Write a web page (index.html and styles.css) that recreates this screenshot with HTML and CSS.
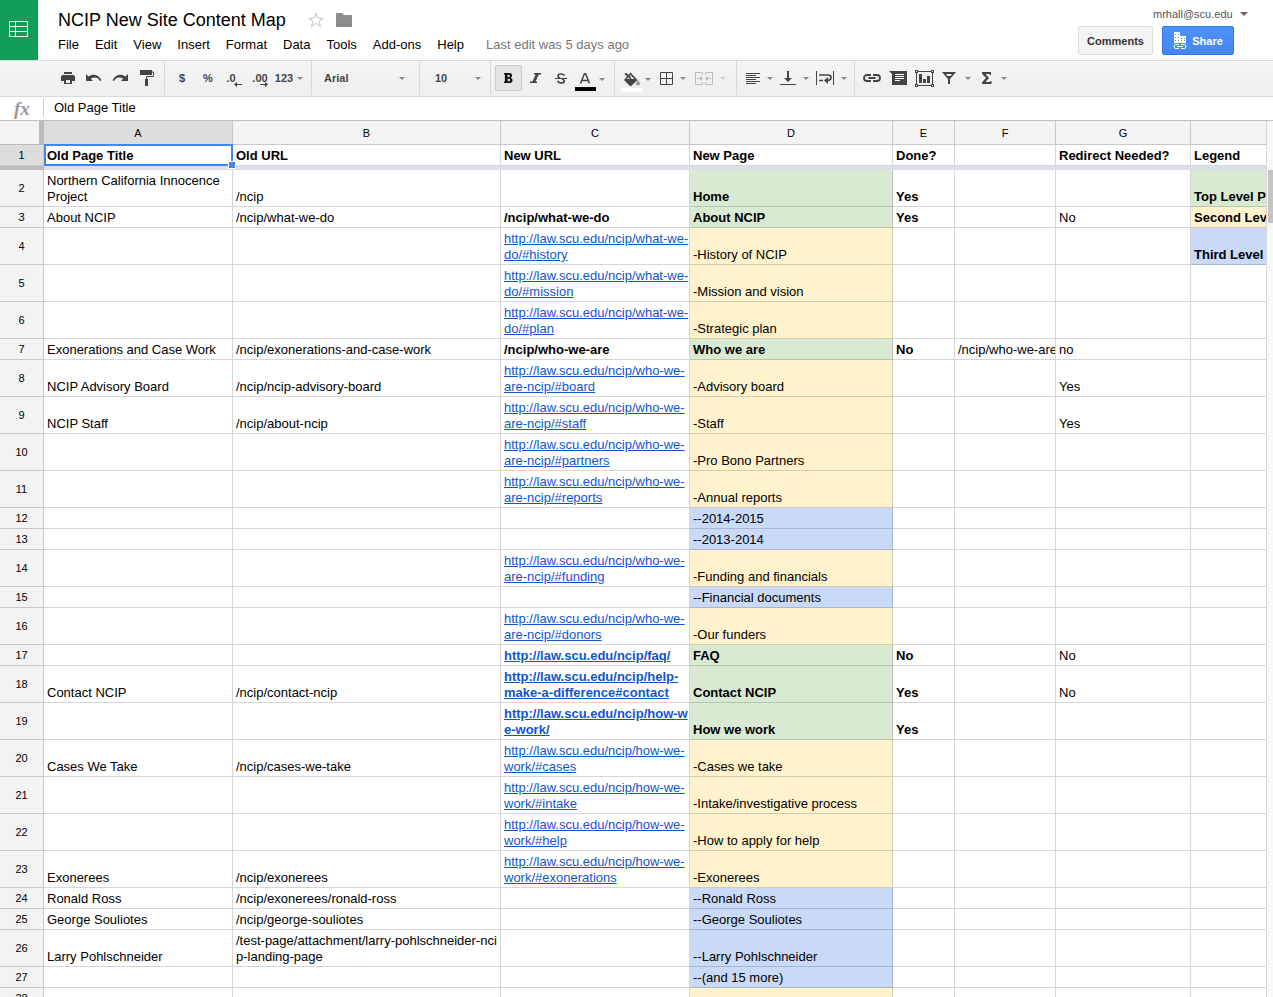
FILE: index.html
```html
<!DOCTYPE html>
<html lang="en">
<head>
<meta charset="utf-8">
<title>NCIP New Site Content Map</title>
<link rel="stylesheet" href="styles.css">
</head>
<body>
<svg class="defs" aria-hidden="true"><symbol id="caret" viewBox="0 0 6 3"><path d="M0 0H6L3 3Z" fill="currentColor"/></symbol></svg>
<header class="top">
  <div class="logo"><svg width="19" height="16" viewBox="0 0 19 16" fill="none" stroke="#fff" stroke-width="1"><path d="M.5.5h18v15H.5zM.5 5.5h18M.5 10.5h18M6.5.5v15"/></svg></div>
  <div class="titles">
    <div class="title-row">
      <h1>NCIP New Site Content Map</h1>
      <button class="plain" aria-label="Star"><svg width="16" height="16" viewBox="0 0 16 16" fill="none" stroke="#c4c4c4"><path d="M8 1 9.800 6.200h5.400L10.900 9.400l1.700 5.200L8 11.400l-4.600 3.200 1.700-5.200L.8 6.200h5.400Z"/></svg></button>
      <button class="plain" aria-label="Move to folder"><svg width="16" height="14" viewBox="0 0 16 14" fill="#8c8c8c"><path d="M0 0h6l2 2h8v12H0z"/></svg></button>
    </div>
    <nav class="menu">
      <button>File</button><button>Edit</button><button>View</button><button>Insert</button><button>Format</button><button>Data</button><button>Tools</button><button>Add-ons</button><button>Help</button>
      <span class="edited">Last edit was 5 days ago</span>
    </nav>
  </div>
  <div class="account">
    <button class="user">mrhall@scu.edu <svg width="8" height="4" viewBox="0 0 8 4"><path d="M0 0h8L4 4z" fill="#666"/></svg></button>
    <div class="actions">
      <button class="btn">Comments</button>
      <button class="btn share"><svg width="14" height="18" viewBox="0 0 14 18"><path d="M1 0h6v4h6v7H1z" fill="#fff"/><path d="M2 2h1v1H2zM5 2h1v1H5zM2 5h1v1H2zM5 5h1v1H5zM2 8h1v1H2zM5 8h1v1H5zM8 6h1v1H8zM11 6h1v1h-1zM8 8h1v1H8zM11 8h1v1h-1z" fill="#4d90fe"/><path d="M6 12.500H3a2 2 0 0 0 0 4h3M8 12.500h3a2 2 0 0 1 0 4H8M4 14.500h6" fill="none" stroke="#fff"/></svg>Share</button>
    </div>
  </div>
</header>
<div class="toolbar">
  <div class="group first">
    <button aria-label="Print"><svg width="14" height="12" viewBox="0 0 14 12"><path d="M3 0h8v2H3zM2 3h10q2 0 2 2v4h-3V7H3v2H0V5q0-2 2-2zM4 8h6v4H4z" fill="#444"/><path d="M3 7h8v5H3z" fill="#444"/><path d="M5 8h4v3H5z" fill="#eee"/></svg></button>
    <button aria-label="Undo"><svg width="16" height="8" viewBox="0 0 16 8"><path d="M0 0v7h7L4.800 4.800C8 2.500 12 3 14 7l1.500-.8C13 .5 7 -1 2.500 2.500Z" fill="#444"/></svg></button>
    <button aria-label="Redo"><svg width="16" height="8" viewBox="0 0 16 8"><path d="M16 0v7H9l2.200-2.200C8 2.500 4 3 2 7L.5 6.200C3 .5 9 -1 13.500 2.500Z" fill="#444"/></svg></button>
    <button class="wide" aria-label="Paint format"><svg width="14" height="16" viewBox="0 0 14 16"><path d="M0 0h12v5H0z" fill="#444"/><path d="M12 2h1.500v4.500h-7V9" fill="none" stroke="#444"/><path d="M5 9h3v7H5z" fill="#444"/></svg></button>
  </div>
  <div class="group numbers">
    <button>$</button>
    <button>%</button>
    <button class="decimal less">.0<svg width="8" height="5" viewBox="0 0 8 5"><path d="M0 2.500 3 0v2h5v1H3v2z" fill="#444"/></svg></button>
    <button class="decimal more">.00<svg width="8" height="5" viewBox="0 0 8 5"><path d="M8 2.500 5 0v2H0v1h5v2z" fill="#444"/></svg></button>
    <button class="format">123<svg class="caret"><use href="#caret"/></svg></button>
  </div>
  <div class="group">
    <label class="pick font"><select aria-label="Font"><option>Arial</option></select><svg class="caret"><use href="#caret"/></svg></label>
  </div>
  <div class="group">
    <label class="pick size"><select aria-label="Font size"><option>10</option></select><svg class="caret"><use href="#caret"/></svg></label>
  </div>
  <div class="group style">
    <button class="pressed" aria-label="Bold"><svg width="9" height="10" viewBox="0 0 10 10" preserveAspectRatio="none"><path fill-rule="evenodd" d="M0 0h6q3 0 3 2.500Q9 4 7.500 4.700 9.500 5.300 9.500 7.200 9.500 10 6 10H0V8.500h1v-7H0zM4 1.800V4h1.500q.9 0 .9-1.100T5.500 1.800zM4 5.800v2.400h1.500q1.100 0 1.100-1.200T5.500 5.800z" fill="#111"/></svg></button>
    <button aria-label="Italic"><svg width="11" height="10" viewBox="0 0 11 10"><path d="M4 0h7v1.500H8.700L5.500 8.500H7V10H0V8.500h2.500l3.200-7H4z" fill="#444"/></svg></button>
    <button aria-label="Strikethrough"><svg width="12" height="11" viewBox="0 0 12 11" fill="none" stroke="#444"><path d="M9.500 2.500Q8.500 1 6 1 3 1 3 3q0 1.300 2 2M7 6q2.200.7 2.200 2 0 2-3.200 2Q3.500 10 2.500 8" stroke-width="1.700"/><path d="M0 5.500h12"/></svg></button>
    <button class="drop color" aria-label="Text color"><svg width="21" height="18" viewBox="0 0 21 18"><path d="m5.500 10.500 4-10h1l4 10M7 7.500h6" fill="none" stroke="#444" stroke-width="1.500"/><path d="M0 14h21v4H0z"/></svg><svg class="caret"><use href="#caret"/></svg></button>
  </div>
  <div class="group paint">
    <button class="drop color" aria-label="Fill color"><svg width="21" height="20" viewBox="0 0 21 20"><path d="M4 1.500 10 7" stroke="#444" stroke-width="1.500"/><path fill-rule="evenodd" d="M9.500.5 16.500 8 9.500 14.500 3 8ZM9.300 2.800 5.800 7h7.400Z" fill="#444"/><path d="M5 1l5 4.500" stroke="#444"/><path d="M17 8q4 5 0 5.500-4-.5 0-5.500" fill="#999"/><path d="M0 16h21v4H0z" fill="#fff"/></svg><svg class="caret"><use href="#caret"/></svg></button>
    <button class="drop roomy" aria-label="Borders"><svg width="13" height="13" viewBox="0 0 13 13" fill="none" stroke="#444"><path d="M.5.5h12v12H.5zM6.500.5v12M.5 6.500h12"/></svg><svg class="caret"><use href="#caret"/></svg></button>
    <button class="drop roomy faded" aria-label="Merge cells" disabled><svg width="18" height="13" viewBox="0 0 18 13" fill="none" stroke="#444"><path d="M7.500 3V.5h-7v12h7V10M10.500 3V.5h7v12h-7V10M2 6.500h4M16 6.500h-4"/><path d="M5 4l3 2.500L5 9zM13 4l-3 2.500L13 9z" fill="#444" stroke="none"/></svg><svg class="caret"><use href="#caret"/></svg></button>
  </div>
  <div class="group align">
    <button class="drop roomy" aria-label="Horizontal align"><svg width="14" height="11" viewBox="0 0 14 11" stroke="#444"><path d="M0 .5h14M0 2.500h10M0 4.500h14M0 6.500h10M0 8.500h14M0 10.500h10"/></svg><svg class="caret"><use href="#caret"/></svg></button>
    <button class="drop roomy" aria-label="Vertical align"><svg width="16" height="14" viewBox="0 0 16 14" fill="#444"><path d="M7 0h2v7h3l-4 4-4-4h3zM0 13h16v1H0z"/></svg><svg class="caret"><use href="#caret"/></svg></button>
    <button class="drop roomy" aria-label="Text wrapping"><svg width="18" height="14" viewBox="0 0 18 14"><path d="M.5 0v14M17.500 0v14" stroke="#444"/><path d="M3 4h9q3 0 3 2.500T12 9.500h-1M3 9.500h4" fill="none" stroke="#444" stroke-width="1.700"/><path d="M12 6v7L8 9.500z" fill="#444"/></svg><svg class="caret"><use href="#caret"/></svg></button>
  </div>
  <div class="group last">
    <button aria-label="Insert link"><svg width="18" height="8" viewBox="0 0 18 8" fill="none" stroke="#444" stroke-width="1.800"><path d="M8 1H4a3 3 0 0 0 0 6h4M10 1h4a3 3 0 0 1 0 6h-4M5.500 4h7"/></svg></button>
    <button aria-label="Insert comment"><svg width="18" height="14" viewBox="0 0 18 14"><path d="M0 0h18v14H3V3z" fill="#444"/><path d="M6 3.500h9M6 5.500h9M6 7.500h9M6 9.500h5" stroke="#fff"/></svg></button>
    <button aria-label="Insert chart"><svg width="19" height="17" viewBox="0 0 19 17"><path d="M1.500 1.500h16v14h-16z" fill="none" stroke="#444"/><path d="M0 0h3v3H0zM16 0h3v3h-3zM0 14h3v3H0zM16 14h3v3h-3zM4 4h3v9H4zM8 9h3v4H8zM12 6h3v7h-3z" fill="#444"/><path d="M1 1h1v1H1zM17 1h1v1h-1zM1 15h1v1H1zM17 15h1v1h-1z" fill="#fff"/></svg></button>
    <button class="drop filter" aria-label="Filter"><svg width="14" height="12" viewBox="0 0 14 12"><path fill-rule="evenodd" d="M0 0h14L8 7v5H6V7ZM4 2l1.500 2h3L10 2Z" fill="#444"/></svg><svg class="caret"><use href="#caret"/></svg></button>
    <button class="drop sum" aria-label="Functions"><svg width="10" height="12" viewBox="0 0 10 12"><path d="M0 0h9v3H8L7.500 2H3.500L7 6l-3.500 4h4.300L8.500 9h1v3H0v-1.700L4 6 0 1.700Z" fill="#444"/></svg><svg class="caret"><use href="#caret"/></svg></button>
  </div>
</div>
<div class="formula">
  <label for="fx">fx</label>
  <input id="fx" type="text" value="Old Page Title">
</div>
<main class="sheet">
  <div class="grid">
    <table>
      <colgroup><col class="c-num"><col class="c-a"><col class="c-b"><col class="c-c"><col class="c-d"><col class="c-e"><col class="c-f"><col class="c-g"><col></colgroup>
      <thead>
        <tr><td class="corner"></td><th class="on">A</th><th>B</th><th>C</th><th>D</th><th>E</th><th>F</th><th>G</th><th></th></tr>
      </thead>
      <tbody>
        <tr class="bold"><th class="on">1</th><td class="active">Old Page Title<span class="ring"><i></i></span></td><td>Old URL</td><td>New URL</td><td>New Page</td><td>Done?</td><td></td><td>Redirect Needed?</td><td>Legend</td></tr>
        <tr class="freeze"><th></th><td colspan="8"></td></tr>
        <tr><th>2</th><td>Northern California Innocence<br>Project</td><td>/ncip</td><td></td><td class="green">Home</td><td class="bold">Yes</td><td></td><td></td><td class="green">Top Level P</td></tr>
        <tr><th>3</th><td>About NCIP</td><td>/ncip/what-we-do</td><td class="bold">/ncip/what-we-do</td><td class="green">About NCIP</td><td class="bold">Yes</td><td></td><td>No</td><td class="yellow bold">Second Lev</td></tr>
        <tr><th>4</th><td></td><td></td><td><a href="#history">http://law.scu.edu/ncip/what-we-<br>do/#history</a></td><td class="yellow">-History of NCIP</td><td></td><td></td><td></td><td class="blue bold">Third Level</td></tr>
        <tr><th>5</th><td></td><td></td><td><a href="#mission">http://law.scu.edu/ncip/what-we-<br>do/#mission</a></td><td class="yellow">-Mission and vision</td><td></td><td></td><td></td><td></td></tr>
        <tr><th>6</th><td></td><td></td><td><a href="#plan">http://law.scu.edu/ncip/what-we-<br>do/#plan</a></td><td class="yellow">-Strategic plan</td><td></td><td></td><td></td><td></td></tr>
        <tr><th>7</th><td>Exonerations and Case Work</td><td>/ncip/exonerations-and-case-work</td><td class="bold">/ncip/who-we-are</td><td class="green">Who we are</td><td class="bold">No</td><td>/ncip/who-we-are</td><td>no</td><td></td></tr>
        <tr><th>8</th><td>NCIP Advisory Board</td><td>/ncip/ncip-advisory-board</td><td><a href="#board">http://law.scu.edu/ncip/who-we-<br>are-ncip/#board</a></td><td class="yellow">-Advisory board</td><td></td><td></td><td>Yes</td><td></td></tr>
        <tr><th>9</th><td>NCIP Staff</td><td>/ncip/about-ncip</td><td><a href="#staff">http://law.scu.edu/ncip/who-we-<br>are-ncip/#staff</a></td><td class="yellow">-Staff</td><td></td><td></td><td>Yes</td><td></td></tr>
        <tr><th>10</th><td></td><td></td><td><a href="#partners">http://law.scu.edu/ncip/who-we-<br>are-ncip/#partners</a></td><td class="yellow">-Pro Bono Partners</td><td></td><td></td><td></td><td></td></tr>
        <tr><th>11</th><td></td><td></td><td><a href="#reports">http://law.scu.edu/ncip/who-we-<br>are-ncip/#reports</a></td><td class="yellow">-Annual reports</td><td></td><td></td><td></td><td></td></tr>
        <tr><th>12</th><td></td><td></td><td></td><td class="blue">--2014-2015</td><td></td><td></td><td></td><td></td></tr>
        <tr><th>13</th><td></td><td></td><td></td><td class="blue">--2013-2014</td><td></td><td></td><td></td><td></td></tr>
        <tr><th>14</th><td></td><td></td><td><a href="#funding">http://law.scu.edu/ncip/who-we-<br>are-ncip/#funding</a></td><td class="yellow">-Funding and financials</td><td></td><td></td><td></td><td></td></tr>
        <tr><th>15</th><td></td><td></td><td></td><td class="blue">--Financial documents</td><td></td><td></td><td></td><td></td></tr>
        <tr><th>16</th><td></td><td></td><td><a href="#donors">http://law.scu.edu/ncip/who-we-<br>are-ncip/#donors</a></td><td class="yellow">-Our funders</td><td></td><td></td><td></td><td></td></tr>
        <tr><th>17</th><td></td><td></td><td class="bold"><a href="#faq">http://law.scu.edu/ncip/faq/</a></td><td class="green">FAQ</td><td class="bold">No</td><td></td><td>No</td><td></td></tr>
        <tr><th>18</th><td>Contact NCIP</td><td>/ncip/contact-ncip</td><td class="bold"><a href="#contact">http://law.scu.edu/ncip/help-<br>make-a-difference#contact</a></td><td class="green">Contact NCIP</td><td class="bold">Yes</td><td></td><td>No</td><td></td></tr>
        <tr><th>19</th><td></td><td></td><td class="bold"><a href="#how">http://law.scu.edu/ncip/how-w<br>e-work/</a></td><td class="green">How we work</td><td class="bold">Yes</td><td></td><td></td><td></td></tr>
        <tr><th>20</th><td>Cases We Take</td><td>/ncip/cases-we-take</td><td><a href="#cases">http://law.scu.edu/ncip/how-we-<br>work/#cases</a></td><td class="yellow">-Cases we take</td><td></td><td></td><td></td><td></td></tr>
        <tr><th>21</th><td></td><td></td><td><a href="#intake">http://law.scu.edu/ncip/how-we-<br>work/#intake</a></td><td class="yellow">-Intake/investigative process</td><td></td><td></td><td></td><td></td></tr>
        <tr><th>22</th><td></td><td></td><td><a href="#help">http://law.scu.edu/ncip/how-we-<br>work/#help</a></td><td class="yellow">-How to apply for help</td><td></td><td></td><td></td><td></td></tr>
        <tr><th>23</th><td>Exonerees</td><td>/ncip/exonerees</td><td><a href="#exonerations">http://law.scu.edu/ncip/how-we-<br>work/#exonerations</a></td><td class="yellow">-Exonerees</td><td></td><td></td><td></td><td></td></tr>
        <tr><th>24</th><td>Ronald Ross</td><td>/ncip/exonerees/ronald-ross</td><td></td><td class="blue">--Ronald Ross</td><td></td><td></td><td></td><td></td></tr>
        <tr><th>25</th><td>George Souliotes</td><td>/ncip/george-souliotes</td><td></td><td class="blue">--George Souliotes</td><td></td><td></td><td></td><td></td></tr>
        <tr><th>26</th><td>Larry Pohlschneider</td><td>/test-page/attachment/larry-pohlschneider-nci<br>p-landing-page</td><td></td><td class="blue">--Larry Pohlschneider</td><td></td><td></td><td></td><td></td></tr>
        <tr><th>27</th><td></td><td></td><td></td><td class="blue">--(and 15 more)</td><td></td><td></td><td></td><td></td></tr>
        <tr><th>28</th><td></td><td></td><td></td><td class="yellow"></td><td></td><td></td><td></td><td></td></tr>
      </tbody>
    </table>
  </div>
  <div class="scroll"><div class="thumb"></div></div>
</main>
</body>
</html>
```
FILE: styles.css
```css
* { box-sizing: border-box; }
body {
  margin: 0;
  height: 100vh;
  display: flex;
  flex-direction: column;
  overflow: hidden;
  background: #fff;
  color: #000;
  font: 13px/16px "Liberation Sans", Arial, sans-serif;
}
button, select, input { font: inherit; color: inherit; margin: 0; padding: 0; border: 0; background: none; }
svg { display: block; flex: none; }
.defs { position: absolute; width: 0; height: 0; }
.caret { width: 6px; height: 3px; color: #888; }

/* Title, menus and account */
.top { display: flex; height: 60px; flex: none; }
.logo { width: 38px; display: flex; justify-content: center; align-items: center; padding: 0 1px 2px 0; background: #0f9d58; }
.titles { flex: 1; padding: 9px 0 0 20px; white-space: nowrap; }
.title-row { display: flex; align-items: center; height: 22px; }
h1 { margin: 0; font-size: 18px; line-height: 22px; font-weight: normal; }
.plain { margin-left: 12px; }
h1 + .plain { margin-left: 22px; }
.menu { display: flex; gap: 16px; padding-top: 6px; }
.edited { padding-left: 6px; color: #777; }
.account { display: flex; flex-direction: column; align-items: flex-end; padding: 6px 24px 0 0; }
.user { display: flex; align-items: center; justify-content: space-between; width: 95px; font-size: 11px; color: #555; }
.actions { display: flex; gap: 9px; padding: 4px 15px 0 0; }
.btn {
  height: 29px; width: 75px; border: 1px solid #dcdcdc; border-radius: 2px; background: #f4f4f4;
  display: flex; align-items: center; justify-content: center; gap: 5px;
  font-size: 11px; font-weight: bold; color: #333;
}
.share { width: 72px; border-color: #3079ed; background: linear-gradient(#4d90fe, #4787ed); color: #fff; }
.account .user { margin-right: 1px; }

/* Toolbar */
.toolbar {
  display: flex; flex: none; height: 37px; border: solid #d9d9d9; border-width: 1px 0;
  background: linear-gradient(#f5f5f5, #eee); font-size: 11px; font-weight: bold; color: #444;
}
.group { display: flex; align-items: center; padding-bottom: 1px; border-right: 1px solid #d9d9d9; }
.group button { display: flex; align-items: center; justify-content: center; width: 26px; height: 26px; }
.first { padding: 0 3px 1px 55px; }
.group .wide { width: 28px; }
.numbers { padding: 0 6px 1px 4px; }
.group .format { width: 32px; gap: 4px; }
.decimal svg { align-self: flex-end; margin: 0 0 4px -2px; }
.more svg { margin-left: -8px; }
.pick { display: flex; align-items: center; }
.pick select { appearance: none; height: 26px; line-height: 26px; outline: 0; }
.font { padding: 0 14px 0 12px; }
.font select { width: 75px; }
.size { padding: 0 9px 0 15px; }
.size select { width: 40px; }
.style { padding: 0 9px 1px 4px; }
.group .pressed { width: 27px; border: 1px solid #ccc; border-radius: 2px; background: #e4e4e4; }
.group .drop { width: auto; }
.color { gap: 3px; }
.color svg:first-child { margin-top: 8px; }
.color .caret { margin-top: 3px; }
.style .color { padding-left: 1px; }
.paint { padding: 0 10px 1px 6px; gap: 9px; }
.roomy { gap: 7px; }
.roomy .caret, .filter .caret, .sum .caret { margin-top: 1px; }
.faded { opacity: .3; }
.align { padding: 0 7px 1px 9px; gap: 7px; }
.last { padding-left: 4px; border: 0; }
.group .filter { gap: 9px; padding-left: 5px; }
.group .sum { gap: 9px; padding-left: 11px; }

/* Formula bar */
.formula { display: flex; align-items: center; flex: none; height: 23px; padding-bottom: 1px; }
.formula label {
  width: 44px; height: 18px; padding-left: 14px; border-right: 1px solid #ccc; color: #999;
  font: italic bold 19px/20px "Liberation Serif", serif;
}
.formula input { flex: 1; padding-left: 10px; outline: 0; }

/* Cells */
.sheet { display: flex; flex: 1; min-height: 0; border-top: 1px solid #c0c0c0; }
.grid { flex: 1; min-width: 0; overflow: hidden; }
table { width: 100%; table-layout: fixed; border-collapse: separate; border-spacing: 0; }
.c-num { width: 44px; }
.c-a, .c-c { width: 189px; }
.c-b { width: 268px; }
.c-d { width: 203px; }
.c-e { width: 62px; }
.c-f { width: 101px; }
.c-g { width: 135px; }
td {
  height: 21px; padding: 3px 0 1px 3px; border: solid rgba(0, 0, 0, .16); border-width: 0 1px 1px 0;
  vertical-align: bottom; white-space: nowrap; overflow: hidden;
}
tr td:last-child { border-right: 0; }
th {
  padding: 0; border: solid #c8c8c8; border-width: 0 1px 1px 0; background: #f3f3f3;
  font-size: 11px; font-weight: normal; vertical-align: middle;
}
thead th { height: 24px; }
thead th:last-child { border-right: 0; }
.on { background: #ddd; }
.corner { padding: 0; border-right: 5px solid #bbb; border-color: #bbb; background: #f3f3f3; }
.freeze th { height: 4px; border: 0; background: #bbb; }
.freeze td { height: 4px; padding: 0; border: 0; background: #dadfe8; }
.bold, .green { font-weight: bold; }
.green { background: #d9ead3; }
.yellow { background: #fff2cc; }
.blue { background: #c9daf8; }
td a { color: #1155cc; text-decoration: underline; }
.active { position: relative; overflow: visible; }
.ring { position: absolute; inset: -1px -1px -1px 0; border: 2px solid #4285f4; }
.ring i { position: absolute; right: -5px; bottom: -5px; width: 8px; height: 8px; border: 1px solid #fff; background: #4285f4; }
.scroll { width: 7px; padding: 49px 0 0 1px; border-left: 1px solid #d9d9d9; background: #f8f8f8; }
.thumb { height: 53px; background: #c4c4c4; }
```
